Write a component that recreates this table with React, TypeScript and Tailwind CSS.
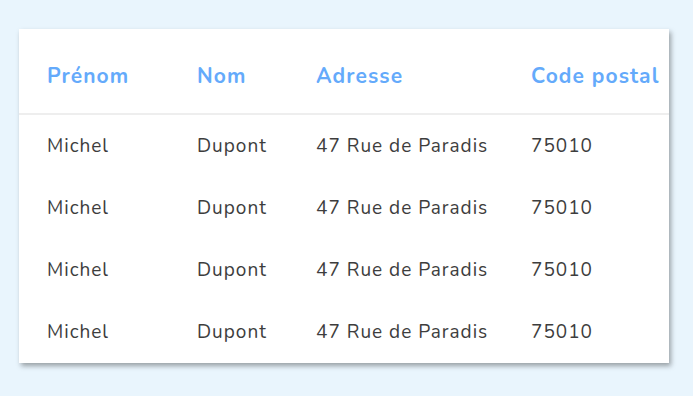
import React from 'react';

interface Person {
  id: number
  prenom: string
  nom: string
  adresse: string
  codePostal: string
}

const people: Person[] = [
  { id: 1, prenom: 'Michel', nom: 'Dupont', adresse: '47 Rue de Paradis', codePostal: '75010' },
  { id: 2, prenom: 'Michel', nom: 'Dupont', adresse: '47 Rue de Paradis', codePostal: '75010' },
  { id: 3, prenom: 'Michel', nom: 'Dupont', adresse: '47 Rue de Paradis', codePostal: '75010' },
  { id: 4, prenom: 'Michel', nom: 'Dupont', adresse: '47 Rue de Paradis', codePostal: '75010' },
];

const cols = 'grid grid-cols-[150px_119px_215px_1fr] pl-[28px]';

const App: React.FC = () => {
  return (
    <div
      className="min-h-[396px] w-full bg-[#e9f5fd] pt-[29px] pl-[19px]"
      style={{ fontFamily: '"Nunito", "Lato", sans-serif' }}
    >
      <div className="w-[650px] bg-white shadow-[2px_3px_5px_rgba(0,0,0,0.35)]">
        <div className={`${cols} h-[86px] items-center pt-[11px] border-b-2 border-[#eeeeee] text-[21px] tracking-[1.1px] font-bold text-[#64aafb]`}>
          <span>Prénom</span>
          <span>Nom</span>
          <span>Adresse</span>
          <span>Code postal</span>
        </div>
        {people.map((p) => (
          <div key={p.id} className={`${cols} h-[62px] items-center text-[19px] tracking-[1px] text-[#3d3d3d]`}>
            <span>{p.prenom}</span>
            <span>{p.nom}</span>
            <span>{p.adresse}</span>
            <span>{p.codePostal}</span>
          </div>
        ))}
      </div>
    </div>
  );
};

export default App;
